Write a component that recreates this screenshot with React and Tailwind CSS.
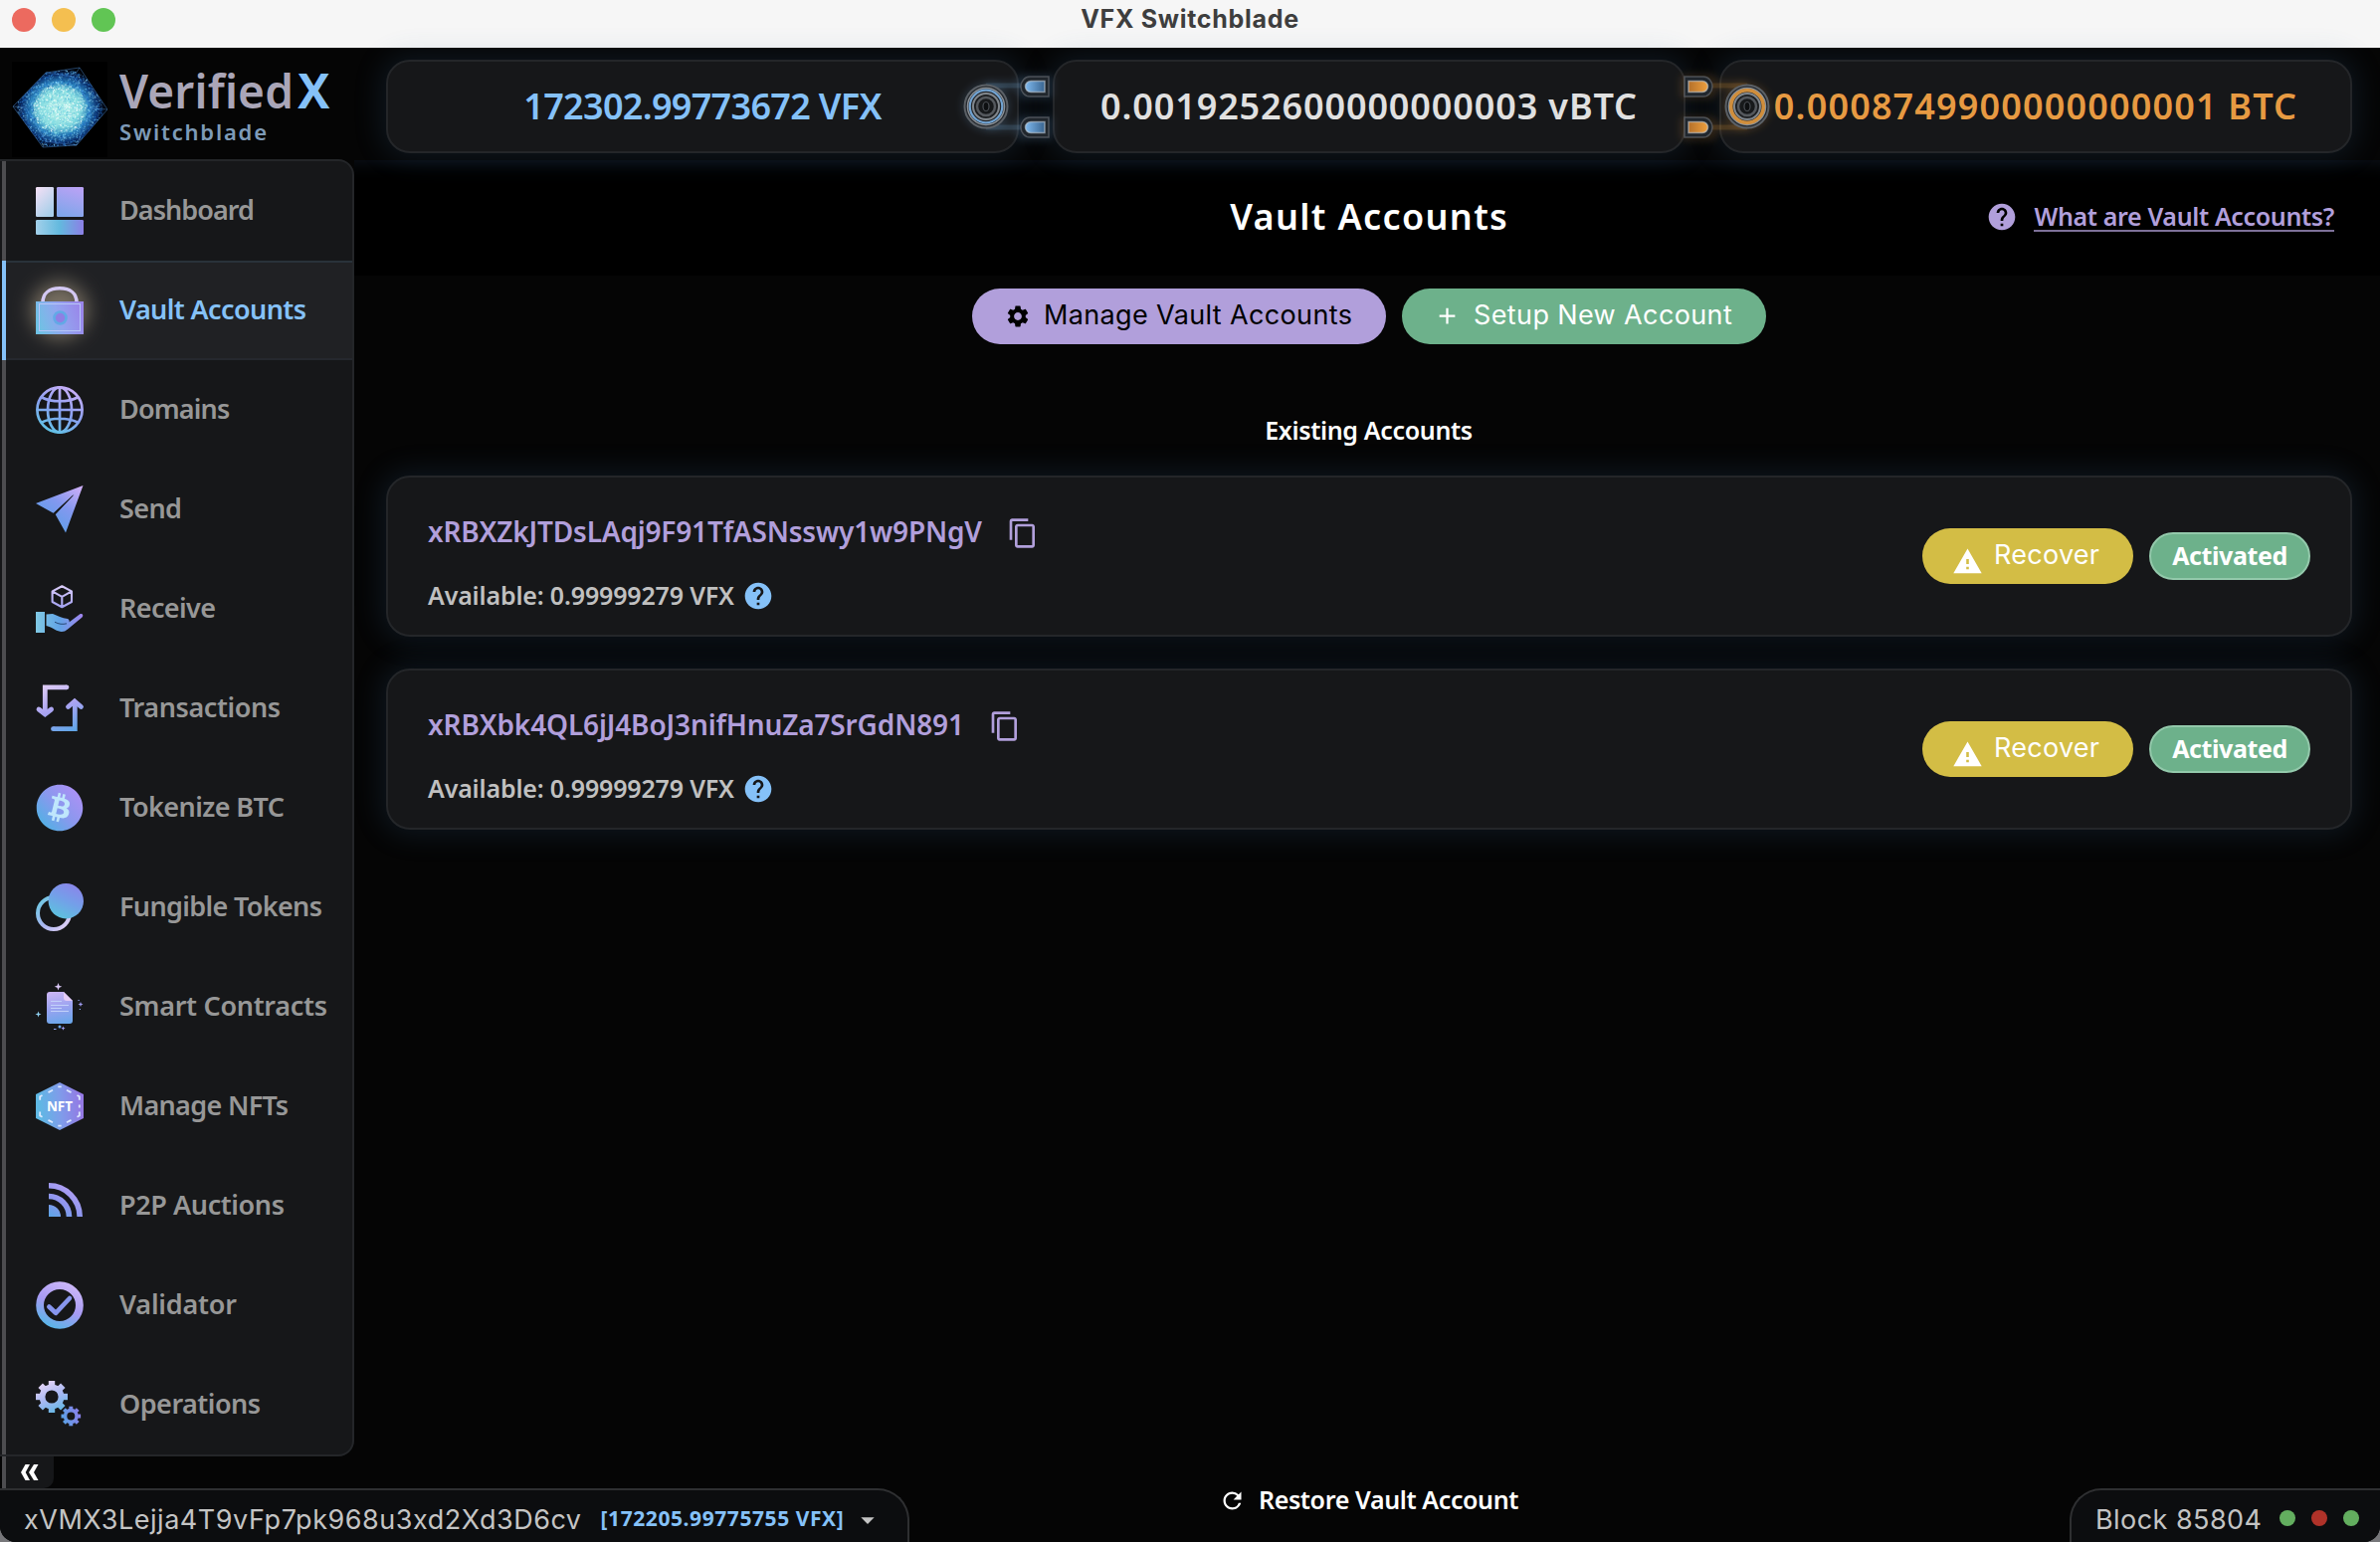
import React from "react";
import { FaBitcoin } from "react-icons/fa";
import { MdHelp, MdSettings, MdAdd, MdContentCopy, MdWarning, MdRefresh, MdArrowDropDown } from "react-icons/md";

function Icon({ id, stops, dir, children }) {
  return (
    <svg viewBox="0 0 48 48" className="block size-12 overflow-visible">
      <defs>
        <linearGradient id={id} gradientUnits="userSpaceOnUse" x1={dir[0]} y1={dir[1]} x2={dir[2]} y2={dir[3]}>
          {stops.map((c, i) => (
            <stop key={i} offset={i / (stops.length - 1)} stopColor={c} />
          ))}
        </linearGradient>
      </defs>
      {children}
    </svg>
  );
}

const DashboardIcon = () => (
  <Icon id="g-dash" stops={["#a3d0ea", "#63b9de", "#8c7fe6"]} dir={[0, 40, 48, 40]}>
    <defs>
      <linearGradient id="g-dash-a" x1="0" y1="0" x2="0.6" y2="1"><stop offset="0" stopColor="#f5e0f6" /><stop offset="1" stopColor="#a9cfe9" /></linearGradient>
      <linearGradient id="g-dash-b" x1="0.7" y1="0" x2="0.4" y2="1"><stop offset="0" stopColor="#b9a2f5" /><stop offset="1" stopColor="#7fa6ea" /></linearGradient>
    </defs>
    <rect width="18" height="30" rx="1.2" fill="url(#g-dash-a)" />
    <rect x="21" width="27" height="30" rx="1.2" fill="url(#g-dash-b)" />
    <rect y="33" width="48" height="15" rx="1.2" fill="url(#g-dash)" />
  </Icon>
);

const VaultIcon = () => (
  <Icon id="g-vault" stops={["#6fc2e4", "#92a5ef", "#9a86ea"]} dir={[2, 40, 46, 24]}>
    <path d="M7 16C7 7 13.500 1.800 24 1.800S41 7 41 16" fill="none" stroke="#d3c8f3" strokeWidth="3.600" />
    <rect y="15" width="48" height="33" fill="url(#g-vault)" />
    <rect x="3.500" y="17.500" width="41" height="27" fill="none" stroke="#b7c6f6" strokeWidth="1" />
    <circle cx="24.500" cy="31.500" r="6" fill="#8f7fe4" stroke="#62a9e6" strokeWidth="2.600" />
  </Icon>
);

const GlobeIcon = () => (
  <Icon id="g-globe" stops={["#5fc4e6", "#8aa0f0", "#c7aef8"]} dir={[12, 46, 34, 2]}>
    <g fill="none" stroke="url(#g-globe)" strokeWidth="2.700">
      <circle cx="24" cy="24" r="22.600" />
      <ellipse cx="24" cy="24" rx="12" ry="22.600" />
      <path d="M24.010 1v46M1 24.010h46M6 11.500c10 5 26 5 36 0M6 36.500c10 -5 26 -5 36 0" />
    </g>
  </Icon>
);

const SendIcon = () => (
  <Icon id="g-send" stops={["#5a9fe8", "#8398ef", "#d3b0f8"]} dir={[14, 44, 46, 0]}>
    <path d="M0 18 47.500 0 30 47.500 19.500 28.800 37 10.500 18 28Z" fill="url(#g-send)" />
    <path d="M17.500 28.300 37.500 9.800 19.500 29Z" fill="#161719" stroke="#161719" strokeWidth="0.600" />
  </Icon>
);

const ReceiveIcon = () => (
  <Icon id="g-recv" stops={["#dccdf8", "#a7a4f2", "#5aa0e6"]} dir={[26, 0, 26, 42]}>
    <defs>
      <linearGradient id="g-hand" x1="0" y1="0" x2="1" y2="0"><stop offset="0" stopColor="#80c9e4" /><stop offset="0.500" stopColor="#62a4e6" /><stop offset="1" stopColor="#a184ee" /></linearGradient>
    </defs>
    <path d="M26.300 1.200 36 6.400V17L26.300 22.200 16.600 17V6.400ZM16.600 6.400 26.300 11.800 36 6.400M26.300 11.800V22" fill="none" stroke="url(#g-recv)" strokeWidth="2.100" strokeLinejoin="round" />
    <path d="M0 27H9V48H0ZM10.500 29.500 17 29C22 31 26 33.500 32 34 34.500 35.500 34 38 32 38.500L44 29.500C46.500 28 48.500 30.500 46.500 32.500L32 44.500C28 48 24 47.500 19 44.800 16 43 14 41.800 10.500 41Z" fill="url(#g-hand)" />
    <path d="M19 37.200C23 39.500 27 39.800 31 38.800" fill="none" stroke="#20406a" strokeWidth="0.900" />
  </Icon>
);

const TransactionsIcon = () => (
  <Icon id="g-tx" stops={["#dccaf6", "#a9a3f2", "#62a6e8"]} dir={[14, 0, 32, 48]}>
    <g fill="none" stroke="url(#g-tx)" strokeWidth="4.800" strokeLinecap="round">
      <path d="M31 2.800H9.300V28" strokeLinecap="butt" />
      <path d="M31 2.800h.01M3 25l6.300 5 6.300-5M32.500 22.500l6.500-5.500 6.500 5.500" />
      <path d="M17.500 44.700H39.300V19" strokeLinecap="butt" />
      <path d="M17.500 44.700h.01" />
    </g>
  </Icon>
);

const BitcoinIcon = () => (
  <Icon id="g-coin" stops={["#4fb2e4", "#8a98ee", "#ae90f5"]} dir={[40, 440, 460, 60]}>
    <circle cx="24" cy="24" r="20" fill="#bfe6fc" />
    <FaBitcoin size="48" fill="url(#g-coin)" />
  </Icon>
);

const TokensIcon = () => (
  <Icon id="g-tok" stops={["#72c7e4", "#a9b5f1", "#e0d0f6"]} dir={[4, 18, 32, 44]}>
    <defs>
      <linearGradient id="g-disc" x1="0.300" y1="1" x2="0.800" y2="0"><stop offset="0" stopColor="#5cc3de" /><stop offset="0.500" stopColor="#749fe9" /><stop offset="1" stopColor="#8d83ea" /></linearGradient>
    </defs>
    <circle cx="18" cy="30" r="16" fill="none" stroke="url(#g-tok)" strokeWidth="4" />
    <circle cx="30.300" cy="17.700" r="17.700" fill="url(#g-disc)" />
  </Icon>
);

const ContractIcon = () => (
  <Icon id="g-doc" stops={["#c9b5f4", "#9aa2f0", "#6ba7ea"]} dir={[20, 9, 26, 41]}>
    <path d="M14 9H28L37 18V38Q37 41 34 41H14Q11 41 11 38V12Q11 9 14 9Z" fill="url(#g-doc)" />
    <path d="M28 9 37 18H31Q28 18 28 15Z" fill="#e6cdf6" />
    <path d="M15 18.500H26M15 22.500H33M15 25.500H26M15 28.500H33" stroke="#c3d2fa" strokeWidth="1.200" fill="none" />
    <path d="M22.500 0l1 2.800 2.800 1-2.800 1-1 2.800-1-2.800-2.800-1 2.800-1Z" fill="#dcc8f8" />
    <path d="M2.500 28.500l.8 2.200 2.200.8-2.200.8-.8 2.200-.8-2.200-2.200-.8 2.200-.8Z" fill="#8fd0f0" />
    <path d="M45 19l.7 1.800 1.800.7-1.800.7-.7 1.800-.7-1.800-1.800-.7 1.800-.7ZM27.500 43.500l.6 1.500 1.500.6-1.500.6-.6 1.500-.6-1.500-1.500-.6 1.500-.6Z" fill="#9f9bf0" />
    <circle cx="24" cy="44" r="1.500" fill="#6ba7ea" />
    <path d="M18 46.500h2.500M42.500 17.500h1.200M43.800 26.500h1.200" stroke="#8fa3f0" strokeWidth="1.200" />
  </Icon>
);

const NftIcon = () => (
  <Icon id="g-nft" stops={["#5fb8e4", "#7f9cea", "#9479e4"]} dir={[4, 30, 46, 26]}>
    <path d="M24 0 48 12V36L24 48 0 36V12Z" fill="url(#g-nft)" />
    <path d="M17 7.800l-4.500 2.300M31 7.800l4.500 2.300M22.300 4.300h3.400M22.300 43.700h3.400M17 40.200l-4.500-2.300M31 40.200l4.500-2.300M6.500 13 4.200 14.300v3.500M4.200 29.500v4L6.500 34.800M41.500 13l2.300 1.300v3.500M43.800 22.500v3M43.800 29.500v4l-2.300 1.300" stroke="#dbe8ff" strokeWidth="1.800" fill="none" />
    <text x="24" y="29" textAnchor="middle" fill="#fff" className="font-['Open_Sans'] text-[13.500px] font-bold">NFT</text>
  </Icon>
);

const AuctionsIcon = () => (
  <Icon id="g-rss" stops={["#5aa6e6", "#8f96ee", "#b3a0f5"]} dir={[14, 36, 34, 4]}>
    <path d="M13 35V23A12 12 0 0 1 25 35Z" fill="url(#g-rss)" />
    <path d="M13 14.500A20.500 20.500 0 0 1 33.500 35M13 3.800A31.200 31.200 0 0 1 44.200 35" fill="none" stroke="url(#g-rss)" strokeWidth="5.600" />
  </Icon>
);

const ValidatorIcon = () => (
  <Icon id="g-val" stops={["#4fb8e6", "#a79af3", "#cfbaf8"]} dir={[12, 48, 34, 0]}>
    <circle cx="24" cy="24" r="19.900" fill="none" stroke="url(#g-val)" strokeWidth="7.800" />
    <path d="M13.300 25.500 20 31.800 34 17" fill="none" stroke="#8796ee" strokeWidth="4.600" strokeLinecap="round" strokeLinejoin="round" />
  </Icon>
);

function Gear({ cx, cy, r, hole, fill }) {
  const body = r * 0.78;
  return (
    <g transform={`translate(${cx} ${cy})`} stroke={fill} fill="none">
      <circle r={(body + hole) / 2} strokeWidth={body - hole} />
      {[0, 45, 90, 135, 180, 225, 270, 315].map((a) => {
        const t = (a * Math.PI) / 180;
        const c = Math.cos(t);
        const s = Math.sin(t);
        return <path key={a} d={`M${c * r * 0.7} ${s * r * 0.7}L${c * r} ${s * r}`} strokeWidth={r * 0.4} />;
      })}
    </g>
  );
}

const OperationsIcon = () => (
  <Icon id="g-gear-a" stops={["#e3d3f6", "#a8b8f2", "#62b8e4"]} dir={[-8, -14, 6, 16]}>
    <defs>
      <linearGradient id="g-gear-b" gradientUnits="userSpaceOnUse" x1="-10" y1="3" x2="9" y2="-3"><stop offset="0" stopColor="#58a4e6" /><stop offset="1" stopColor="#8b80ea" /></linearGradient>
    </defs>
    <Gear cx={16} cy={16} r={16} hole={6.6} fill="url(#g-gear-a)" />
    <Gear cx={35.3} cy={35.5} r={9.8} hole={4} fill="url(#g-gear-b)" />
  </Icon>
);

const NAV = [
  ["Dashboard", DashboardIcon, "tracking-[-0.94px]"],
  ["Vault Accounts", VaultIcon, "tracking-[-0.60px]"],
  ["Domains", GlobeIcon, "tracking-[-0.85px]"],
  ["Send", SendIcon, "tracking-[-0.60px]"],
  ["Receive", ReceiveIcon, "tracking-[-0.62px]"],
  ["Transactions", TransactionsIcon, "tracking-[-0.42px]"],
  ["Tokenize BTC", BitcoinIcon, "tracking-[-0.58px]"],
  ["Fungible Tokens", TokensIcon, "tracking-[-0.66px]"],
  ["Smart Contracts", ContractIcon, "tracking-[-0.30px]"],
  ["Manage NFTs", NftIcon, "tracking-[-0.66px]"],
  ["P2P Auctions", AuctionsIcon, "tracking-[-0.40px]"],
  ["Validator", ValidatorIcon, "tracking-[-0.20px]"],
  ["Operations", OperationsIcon, "tracking-[-0.52px]"],
];

// Deterministic speckle for the glowing core of the logo.
const SPARKS = (() => {
  let seed = 7;
  const rnd = () => (seed = (seed * 16807) % 2147483647) / 2147483647;
  const inner = ["#dcfff6", "#a9f0ea", "#7fdce8", "#ffffff", "#5cc0dc"];
  const outer = ["#4aa8e8", "#1f6fc8", "#8fd8f4", "#134f9c"];
  return Array.from({ length: 2200 }, () => {
    const a = rnd() * Math.PI * 2;
    const d = Math.pow(rnd(), 0.62) * 43;
    const set = d > 27 ? outer : inner;
    return { x: 48 + Math.cos(a) * d, y: 47 + Math.sin(a) * d * 0.93, tone: set[Math.floor(rnd() * set.length)], o: (d > 30 ? 0.3 : 0.45) + rnd() * 0.45 };
  });
})();

const Logo = () => (
  <svg viewBox="0 0 96 96" className="block size-24 shrink-0 bg-black">
    <defs>
      <radialGradient id="g-orb">
        <stop offset="0" stopColor="#bdf3ea" />
        <stop offset="0.420" stopColor="#86dbe0" />
        <stop offset="0.620" stopColor="#2a80ba" />
        <stop offset="0.800" stopColor="#0a2c68" />
        <stop offset="1" stopColor="#020818" stopOpacity="0" />
      </radialGradient>
      <clipPath id="c-orb"><path d="M1 45 34 11 68 6 96 48 65 84 31 86Z" /></clipPath>
    </defs>
    <g clipPath="url(#c-orb)">
      <ellipse cx="48" cy="47" rx="48" ry="43" fill="url(#g-orb)" />
      {SPARKS.map((s, i) => (
        <rect key={i} x={s.x} y={s.y} width="1.200" height="1.200" fill={s.tone} opacity={s.o} />
      ))}
    </g>
    <path d="M1 45 34 11 68 6 96 48 65 84 31 86ZM34 11 62 15 68 6M62 15 80 47 96 48M80 47 65 84M1 45 14 46 34 80 31 86M34 80 65 84" fill="none" stroke="#4d8fd6" strokeOpacity="0.500" strokeWidth="0.900" />
  </svg>
);

const Plug = ({ color, dark, flip }) => (
  <svg viewBox="0 0 96 72" className={flip ? "block w-24 h-[72px] -scale-x-100 overflow-visible" : "block w-24 h-[72px] overflow-visible"}>
    <defs>
      <linearGradient id={flip ? "p-o" : "p-b"}><stop offset="0" stopColor={color} /><stop offset="1" stopColor={dark} /></linearGradient>
      <filter id={flip ? "f-o" : "f-b"} x="-30%" y="-60%" width="160%" height="220%"><feGaussianBlur stdDeviation="4" /></filter>
    </defs>
    <g fill="none" stroke={color} strokeOpacity="0.260" strokeWidth="5" filter={flip ? "url(#f-o)" : "url(#f-b)"}>
      <circle cx="29" cy="36" r="20" />
      <path d="M29 15H66M29 57H66M64 8H92V24H64ZM64 50H92V66H64Z" />
    </g>
    <path d="M29 15H64M29 57H64" stroke={color} strokeOpacity="0.150" strokeWidth="5" />
    <circle cx="29" cy="36" r="21.500" fill="#25292e" stroke="#5b6066" strokeWidth="2" />
    <circle cx="29" cy="36" r="18.500" fill="none" stroke="#8b9197" strokeWidth="1.500" />
    <circle cx="29" cy="36" r="16.300" fill="none" stroke={color} strokeOpacity="0.850" strokeWidth={flip ? 3.6 : 2.2} />
    <circle cx="29" cy="36" r="13" fill="#1d1f22" stroke="#9aa0a6" strokeOpacity="0.800" strokeWidth="2" />
    <circle cx="29" cy="36" r="9" fill="#17191b" stroke="#55595e" strokeWidth="2.500" />
    <ellipse cx="29" cy="36" rx="3" ry="4.500" fill="#0d0f11" stroke="#4a4e53" strokeWidth="1.200" />
    {[16, 57].map((y) => (
      <g key={y}>
        <path d={`M92 ${y - 10}H73A9 10 0 0 0 73 ${y + 10}H92Z`} fill="#20262c" stroke="#6c7278" strokeOpacity="0.600" strokeWidth="1.500" />
        <path d={`M88 ${y - 5.5}H74A5.500 5.500 0 0 0 74 ${y + 5.5}H88Z`} fill={flip ? "url(#p-o)" : "url(#p-b)"} stroke="#c2cbd4" strokeOpacity="0.600" strokeWidth="1.500" />
      </g>
    ))}
  </svg>
);

const Balance = ({ className, children }) => (
  <div className={"flex-1 h-[94px] rounded-[24px] border-2 border-[#242629] bg-[#161719] flex items-center justify-center whitespace-nowrap text-[36px] font-semibold shadow-[0_0_28px_6px_rgba(60,110,160,0.16)] " + className}>{children}</div>
);

const ACCOUNTS = [
  { address: "xRBXZkJTDsLAqj9F91TfASNsswy1w9PNgV", tracking: "tracking-[-0.18px]" },
  { address: "xRBXbk4QL6jJ4BoJ3nifHnuZa7SrGdN891", tracking: "tracking-[-0.14px]" },
];

const Account = ({ address, tracking }) => (
  <div className="h-[162px] rounded-[24px] border-2 border-[#242629] bg-[#161719] px-10 flex items-center justify-between whitespace-nowrap shadow-[0_0_28px_6px_rgba(60,110,160,0.16)]">
    <div className="flex flex-col pt-[14px]">
      <div className="flex items-center h-10 -mt-1 text-[#b19fdb] text-[28px] font-semibold">
        <span className={tracking}>{address}</span>
        <MdContentCopy className="size-8 ml-[25px] mt-1" />
      </div>
      <div className="flex items-center h-10 mt-[25px] -mb-1 text-[#c0c0c0] text-[25px] font-semibold">
        <span className="tracking-[-0.16px]">Available: 0.99999279 VFX</span>
        <MdHelp className="size-8 ml-2 text-[#85c1f8]" />
      </div>
    </div>
    <div className="flex items-center gap-4">
      <div className="h-14 w-[212px] rounded-full bg-[#d3bd45] flex items-start pl-[30px] font-['Inter'] text-[27px] leading-[54px]">
        <MdWarning className="size-[31px] mt-[18px]" />
        <span className="ml-[11px] tracking-[0.27px]">Recover</span>
      </div>
      <div className="h-12 w-[162px] rounded-full border-2 border-[#93c9ab] bg-[#6db18b] flex items-start justify-center text-[25px] leading-[42px] font-bold">
        <span className="tracking-[-0.42px]">Activated</span>
      </div>
    </div>
  </div>
);

export default function App() {
  return (
    <div className="w-[2392px] h-[1550px] overflow-hidden bg-[#77777a] font-['Noto_Sans',sans-serif]">
      <div className="relative w-full h-full flex flex-col overflow-hidden rounded-b-[16px] bg-[#050505] text-white">
        <div className="relative h-12 shrink-0 bg-[#f6f6f6] flex items-start justify-center pt-1">
          <div className="absolute left-3 top-2 flex gap-4">
            <span className="size-6 rounded-full bg-[#ec6a5f]" />
            <span className="size-6 rounded-full bg-[#f4bf50]" />
            <span className="size-6 rounded-full bg-[#61c554]" />
          </div>
          <span className="font-['Inter'] font-bold text-[25px] leading-[30px] tracking-[0.71px] text-[#3e3e3e]">VFX Switchblade</span>
        </div>

        <div className="flex-1 flex min-h-0">
          <aside className="w-[356px] shrink-0 flex flex-col whitespace-nowrap">
            <div className="h-[112px] flex items-start pl-3 pt-[14px]">
              <Logo />
              <div className="pl-3 flex flex-col items-start">
                <div className="flex items-baseline text-[46px] leading-[54px] pt-0.5 font-semibold text-[#aaa6b8]">
                  <span className="tracking-[0.17px]">Verified</span>
                  <span className="ml-1 font-['Open_Sans'] font-bold text-[48px] text-[#85c1f8]">X</span>
                </div>
                <span className="text-[22px] leading-7 tracking-[1.79px] font-semibold text-[#7e9bb8]">Switchblade</span>
              </div>
            </div>
            <nav className="h-[1304px] rounded-r-[16px] border-2 border-l-0 border-[#242629] bg-[#161719] overflow-hidden pl-0.5">
              {NAV.map(([label, Glyph, tracking]) => {
                const active = label === "Vault Accounts";
                return (
                  <div
                    key={label}
                    className={
                      active
                        ? "h-[100px] flex items-center border-l-4 border-[#85c1f8] bg-[#202124] text-[#85c1f8] shadow-[inset_0_2px_0_#29323a,inset_0_-2px_0_#25282e]"
                        : "h-[100px] flex items-center border-l-4 border-[#4d4d50] text-[#979797]"
                    }
                  >
                    <div className="relative ml-[30px]">
                      {active && <div className="absolute -inset-1 rounded-full bg-[#b5a68c] opacity-60 blur-[10px]" />}
                      <div className="relative"><Glyph /></div>
                    </div>
                    <span className={"ml-9 pb-0.5 text-[27px] font-semibold " + tracking}>{label}</span>
                  </div>
                );
              })}
            </nav>
            <div className="ml-0.5 h-8 w-[52px] border-l-4 border-[#4d4d50] rounded-br-[10px] bg-[#161719] flex items-center pl-[15px]">
              <svg viewBox="0 0 18 16" className="block w-[18px] h-4"><path d="M9 0H4.500L0 8l4.500 8H9L4.700 8ZM17.500 0H13L8 8l5 8h4.500L13 8Z" fill="#fff" /></svg>
            </div>
          </aside>

          <main className="flex-1 flex flex-col whitespace-nowrap">
            <div className="relative h-[113px] pt-3 pl-8 pr-7 flex gap-[34px]">
              <Balance className="text-[#85c1f8] tracking-[-0.70px]">172302.99773672 VFX</Balance>
              <Balance className="text-[#e0e0e0] tracking-[0.87px]">0.0019252600000000003 vBTC</Balance>
              <Balance className="text-[#e79a42] tracking-[1.15px]">0.0008749900000000001 BTC</Balance>
              <div className="absolute left-[606px] top-[23px]"><Plug color="#7fb9ee" dark="#39648f" /></div>
              <div className="absolute left-[1333px] top-[23px]"><Plug color="#eea03e" dark="#b4702a" flip /></div>
            </div>

            <div className="grid grid-cols-[1fr_auto_1fr] items-center h-[116px] bg-black shadow-[inset_0_20px_20px_-20px_rgba(20,30,42,0.8)] pl-[3px]">
              <div />
              <span className="text-[36px] font-semibold leading-[112px] pb-0.5 tracking-[1.36px] -mr-[1.36px]">Vault Accounts</span>
              <div className="flex items-center justify-end pr-[46px] pb-0.5 text-[#b19fdb]">
                <MdHelp className="size-8 mr-4" />
                <span className="text-[25px] leading-[27px] font-semibold tracking-[-0.35px] border-b-2 border-[#7d7199]">What are Vault Accounts?</span>
              </div>
            </div>

            <div className="flex justify-center gap-4 pt-[13px] pl-[4px] font-['Inter'] text-[27px] leading-[54px]">
              <div className="h-14 w-[416px] rounded-full bg-[#b19fdb] text-black flex pl-[33px]">
                <MdSettings className="size-[26px] mt-[15px]" />
                <span className="ml-[13px] tracking-[0.36px]">Manage Vault Accounts</span>
              </div>
              <div className="h-14 w-[366px] rounded-full bg-[#6db18b] flex pl-8">
                <MdAdd className="size-[27px] mt-[14px]" />
                <span className="ml-[13px] tracking-[0.38px]">Setup New Account</span>
              </div>
            </div>

            <div className="flex justify-center pt-[66px] pl-[3px] text-[25px] leading-10 font-semibold tracking-[-0.34px]">Existing Accounts</div>

            <div className="flex flex-col gap-8 pt-[26px] pl-8 pr-7">
              {ACCOUNTS.map((a) => <Account key={a.address} {...a} />)}
            </div>
          </main>
        </div>

        <footer className="absolute inset-x-0 bottom-0 h-[64px] flex items-end justify-between whitespace-nowrap text-[#c4c4c4]">
          <div className="h-[54px] w-[914px] rounded-tr-[32px] border-t-2 border-r-2 border-[#2e2f31] bg-[#0c0d0f] flex items-center pl-6 pt-2">
            <span className="font-['Inter'] text-[27px] tracking-[0.53px]">xVMX3Lejja4T9vFp7pk968u3xd2Xd3D6cv</span>
            <span className="ml-[19px] pb-0.5 text-[21px] font-bold tracking-[0.57px] text-[#85c1f8]">[172205.99775755 VFX]</span>
            <MdArrowDropDown className="size-8 ml-2" />
          </div>
          <div className="self-start h-11 flex items-center text-white text-[25px] font-semibold">
            <MdRefresh className="size-[27px] mr-[13px]" />
            <span className="tracking-[-0.38px]">Restore Vault Account</span>
          </div>
          <div className="h-[54px] w-[312px] ml-[243px] rounded-tl-[32px] border-t-2 border-l-2 border-[#2e2f31] bg-[#0c0d0f] flex items-center pl-6 pt-2">
            <span className="font-['Inter'] text-[27px] tracking-[0.45px]">Block 85804</span>
            <span className="ml-[18px] mb-1 size-4 rounded-full bg-[#63ae5f]" />
            <span className="ml-4 mb-1 size-4 rounded-full bg-[#b03229]" />
            <span className="ml-4 mb-1 size-4 rounded-full bg-[#63ae5f]" />
          </div>
        </footer>
      </div>
    </div>
  );
}
